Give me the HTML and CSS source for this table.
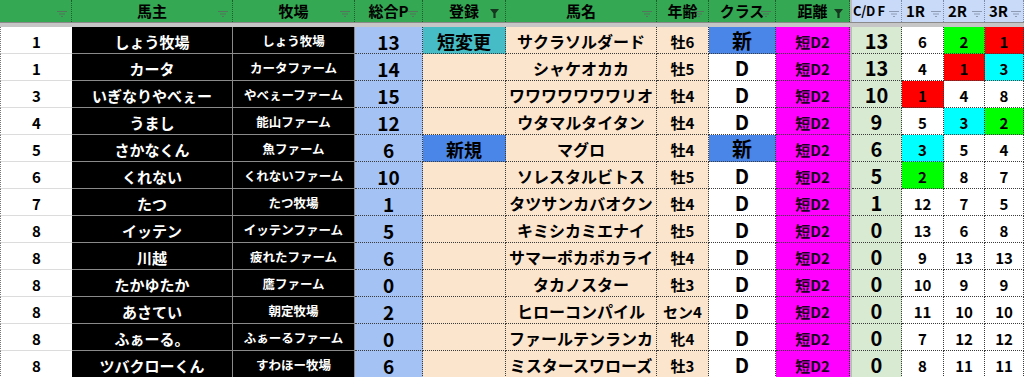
FILE: index.html
```html
<!DOCTYPE html>
<html lang="ja">
<head>
<meta charset="utf-8">
<title>Sheet</title>
<link rel="stylesheet" href="styles.css">
</head>
<body>
<div class="sheet">
  <div class="row head">
    <div class="h h-g"><svg class="fi" viewBox="0 0 10 6"><path d="M0 .5h10M2 3h6M4 5.5h2"/></svg></div>
    <div class="h h-g">馬主<svg class="fi" viewBox="0 0 10 6"><path d="M0 .5h10M2 3h6M4 5.5h2"/></svg></div>
    <div class="h h-g">牧場<svg class="fi" viewBox="0 0 10 6"><path d="M0 .5h10M2 3h6M4 5.5h2"/></svg></div>
    <div class="h h-g">総合P<svg class="fi" viewBox="0 0 10 6"><path d="M0 .5h10M2 3h6M4 5.5h2"/></svg></div>
    <div class="h h-g">登録<svg class="fa" viewBox="0 0 9 9"><path d="M0 0h9L5.6 4.2V9H3.4V4.2z"/></svg></div>
    <div class="h h-g">馬名<svg class="fi" viewBox="0 0 10 6"><path d="M0 .5h10M2 3h6M4 5.5h2"/></svg></div>
    <div class="h h-g">年齢<svg class="fi" viewBox="0 0 10 6"><path d="M0 .5h10M2 3h6M4 5.5h2"/></svg></div>
    <div class="h h-g">クラス<svg class="fi" viewBox="0 0 10 6"><path d="M0 .5h10M2 3h6M4 5.5h2"/></svg></div>
    <div class="h h-g">距離<svg class="fa" viewBox="0 0 9 9"><path d="M0 0h9L5.6 4.2V9H3.4V4.2z"/></svg></div>
    <div class="vsep"></div>
    <div class="h h-b h-small">C/D F<svg class="fi" viewBox="0 0 10 6"><path d="M0 .5h10M2 3h6M4 5.5h2"/></svg></div>
    <div class="h h-b h-left">1R<svg class="fi" viewBox="0 0 10 6"><path d="M0 .5h10M2 3h6M4 5.5h2"/></svg></div>
    <div class="h h-b h-left">2R<svg class="fi" viewBox="0 0 10 6"><path d="M0 .5h10M2 3h6M4 5.5h2"/></svg></div>
    <div class="h h-b h-left">3R<svg class="fi" viewBox="0 0 10 6"><path d="M0 .5h10M2 3h6M4 5.5h2"/></svg></div>
  </div>
  <div class="hsep"></div>

  <div class="row">
    <div class="c rank">1</div><div class="c owner">しょう牧場</div><div class="c farm">しょう牧場</div><div class="c pts">13</div><div class="c reg teal">短変更</div><div class="c horse">サクラソルダード</div><div class="c age">牡6</div><div class="c cls blue">新</div><div class="c dist">短D2</div><div class="vsep"></div><div class="c cdf">13</div><div class="c r">6</div><div class="c r green">2</div><div class="c r red">1</div>
  </div>
  <div class="row">
    <div class="c rank">1</div><div class="c owner">カータ</div><div class="c farm">カータファーム</div><div class="c pts">14</div><div class="c reg"></div><div class="c horse">シャケオカカ</div><div class="c age">牡5</div><div class="c cls">D</div><div class="c dist">短D2</div><div class="vsep"></div><div class="c cdf">13</div><div class="c r">4</div><div class="c r red">1</div><div class="c r cyan">3</div>
  </div>
  <div class="row">
    <div class="c rank">3</div><div class="c owner">いぎなりやべぇー</div><div class="c farm">やべぇーファーム</div><div class="c pts">15</div><div class="c reg"></div><div class="c horse">ワワワワワワワリオ</div><div class="c age">牡4</div><div class="c cls">D</div><div class="c dist">短D2</div><div class="vsep"></div><div class="c cdf">10</div><div class="c r red">1</div><div class="c r">4</div><div class="c r">8</div>
  </div>
  <div class="row">
    <div class="c rank">4</div><div class="c owner">うまし</div><div class="c farm">能山ファーム</div><div class="c pts">12</div><div class="c reg"></div><div class="c horse">ウタマルタイタン</div><div class="c age">牡4</div><div class="c cls">D</div><div class="c dist">短D2</div><div class="vsep"></div><div class="c cdf">9</div><div class="c r">5</div><div class="c r cyan">3</div><div class="c r green">2</div>
  </div>
  <div class="row">
    <div class="c rank">5</div><div class="c owner">さかなくん</div><div class="c farm">魚ファーム</div><div class="c pts">6</div><div class="c reg blue">新規</div><div class="c horse">マグロ</div><div class="c age">牡4</div><div class="c cls blue">新</div><div class="c dist">短D2</div><div class="vsep"></div><div class="c cdf">6</div><div class="c r cyan">3</div><div class="c r">5</div><div class="c r">4</div>
  </div>
  <div class="row">
    <div class="c rank">6</div><div class="c owner">くれない</div><div class="c farm">くれないファーム</div><div class="c pts">10</div><div class="c reg"></div><div class="c horse">ソレスタルビトス</div><div class="c age">牡5</div><div class="c cls">D</div><div class="c dist">短D2</div><div class="vsep"></div><div class="c cdf">5</div><div class="c r green">2</div><div class="c r">8</div><div class="c r">7</div>
  </div>
  <div class="row">
    <div class="c rank">7</div><div class="c owner">たつ</div><div class="c farm">たつ牧場</div><div class="c pts">1</div><div class="c reg"></div><div class="c horse">タツサンカバオクン</div><div class="c age">牡4</div><div class="c cls">D</div><div class="c dist">短D2</div><div class="vsep"></div><div class="c cdf">1</div><div class="c r">12</div><div class="c r">7</div><div class="c r">5</div>
  </div>
  <div class="row">
    <div class="c rank">8</div><div class="c owner">イッテン</div><div class="c farm">イッテンファーム</div><div class="c pts">5</div><div class="c reg"></div><div class="c horse">キミシカミエナイ</div><div class="c age">牡5</div><div class="c cls">D</div><div class="c dist">短D2</div><div class="vsep"></div><div class="c cdf">0</div><div class="c r">13</div><div class="c r">6</div><div class="c r">8</div>
  </div>
  <div class="row">
    <div class="c rank">8</div><div class="c owner">川越</div><div class="c farm">疲れたファーム</div><div class="c pts">6</div><div class="c reg"></div><div class="c horse">サマーポカポカライ</div><div class="c age">牡4</div><div class="c cls">D</div><div class="c dist">短D2</div><div class="vsep"></div><div class="c cdf">0</div><div class="c r">9</div><div class="c r">13</div><div class="c r">13</div>
  </div>
  <div class="row">
    <div class="c rank">8</div><div class="c owner">たかゆたか</div><div class="c farm">鷹ファーム</div><div class="c pts">0</div><div class="c reg"></div><div class="c horse">タカノスター</div><div class="c age">牡3</div><div class="c cls">D</div><div class="c dist">短D2</div><div class="vsep"></div><div class="c cdf">0</div><div class="c r">10</div><div class="c r">9</div><div class="c r">9</div>
  </div>
  <div class="row">
    <div class="c rank">8</div><div class="c owner">あさてい</div><div class="c farm">朝定牧場</div><div class="c pts">2</div><div class="c reg"></div><div class="c horse">ヒローコンパイル</div><div class="c age">セン4</div><div class="c cls">D</div><div class="c dist">短D2</div><div class="vsep"></div><div class="c cdf">0</div><div class="c r">11</div><div class="c r">10</div><div class="c r">10</div>
  </div>
  <div class="row">
    <div class="c rank">8</div><div class="c owner">ふぁーる。</div><div class="c farm">ふぁーるファーム</div><div class="c pts">0</div><div class="c reg"></div><div class="c horse">ファールテンランカ</div><div class="c age">牝4</div><div class="c cls">D</div><div class="c dist">短D2</div><div class="vsep"></div><div class="c cdf">0</div><div class="c r">7</div><div class="c r">12</div><div class="c r">12</div>
  </div>
  <div class="row">
    <div class="c rank">8</div><div class="c owner">ツバクローくん</div><div class="c farm">すわほー牧場</div><div class="c pts">6</div><div class="c reg"></div><div class="c horse">ミスタースワローズ</div><div class="c age">牡3</div><div class="c cls">D</div><div class="c dist">短D2</div><div class="vsep"></div><div class="c cdf">0</div><div class="c r">8</div><div class="c r">11</div><div class="c r">11</div>
  </div>
</div>
</body>
</html>
```

FILE: styles.css
```css
html, body {
  margin: 0;
  padding: 0;
  background: #ffffff;
}
body {
  font-family: "Noto Sans CJK JP", "Noto Sans", sans-serif;
  font-weight: 700;
  color: #000;
  overflow: hidden;
}
.sheet {
  width: 1024px;
  display: flex;
  flex-direction: column;
}
.row {
  display: grid;
  grid-template-columns: 72px 161px 122px 68px 83px 151px 52px 67px 74px 2px 50px 42px 41px 39px;
  height: 27px;
}
.head {
  height: 22px;
}
.hsep {
  height: 5px;
  background: #c6c6c6;
  border-top: 1px solid #8a8a8a;
  box-sizing: border-box;
}
.vsep {
  background: #bcbcbc;
}
.h {
  position: relative;
  box-sizing: border-box;
  display: flex;
  align-items: center;
  justify-content: center;
  font-size: 15px;
  line-height: 1;
  white-space: nowrap;
  padding-bottom: 1px;
}
.h-g {
  background: #34a853;
  border-right: 1px dotted #1d5e2c;
}
.h-b {
  background: #c9daf8;
  border-right: 1px dotted #7a8aa8;
}
.h-small {
  font-size: 13px;
  letter-spacing: -0.3px;
  justify-content: flex-start;
  padding-left: 1px;
}
.h-left {
  justify-content: flex-start;
  padding-left: 4px;
}
.fi {
  position: absolute;
  right: 4px;
  bottom: 5px;
  width: 10px;
  height: 6px;
  fill: none;
  stroke: #52755c;
  stroke-width: 1;
}
.h-b .fi {
  stroke: #8c9ab3;
  right: 2px;
}
.fa {
  position: absolute;
  right: 6px;
  bottom: 4px;
  width: 9px;
  height: 9px;
  fill: #17361f;
}
.c {
  box-sizing: border-box;
  display: flex;
  align-items: center;
  justify-content: center;
  white-space: nowrap;
  overflow: hidden;
  line-height: 1;
  border-right: 1px dotted #3a3a3a;
  border-bottom: 1px dotted #3a3a3a;
  padding-top: 2px;
}
.rank {
  background: #ffffff;
  font-size: 15px;
  border-left: 1px dotted #777;
  border-right: none;
  border-bottom: 1px solid #dcdcdc;
}
.owner, .farm {
  background: #000000;
  color: #ffffff;
  border-right: 1px solid #8a8a8a;
  border-bottom: 1px solid #8a8a8a;
}
.owner { font-size: 15px; }
.farm { font-size: 12.5px; }
.pts {
  background: #a4c2f4;
  font-size: 19px;
}
.reg {
  background: #fce5cd;
  font-size: 18px;
}
.horse {
  background: #fce5cd;
  font-size: 16px;
}
.age {
  background: #fce5cd;
  font-size: 15px;
}
.cls {
  background: #ffffff;
  font-size: 20px;
}
.dist {
  background: #ff00ff;
  font-size: 15px;
  color: #1c001c;
}
.cdf {
  background: #d9ead3;
  font-size: 20px;
}
.r {
  background: #ffffff;
  font-size: 15px;
}
.teal { background: #46bdc6; }
.blue { background: #4a86e8; }
.green { background: #00ff00; }
.red { background: #ff0000; }
.cyan { background: #00ffff; }
```
